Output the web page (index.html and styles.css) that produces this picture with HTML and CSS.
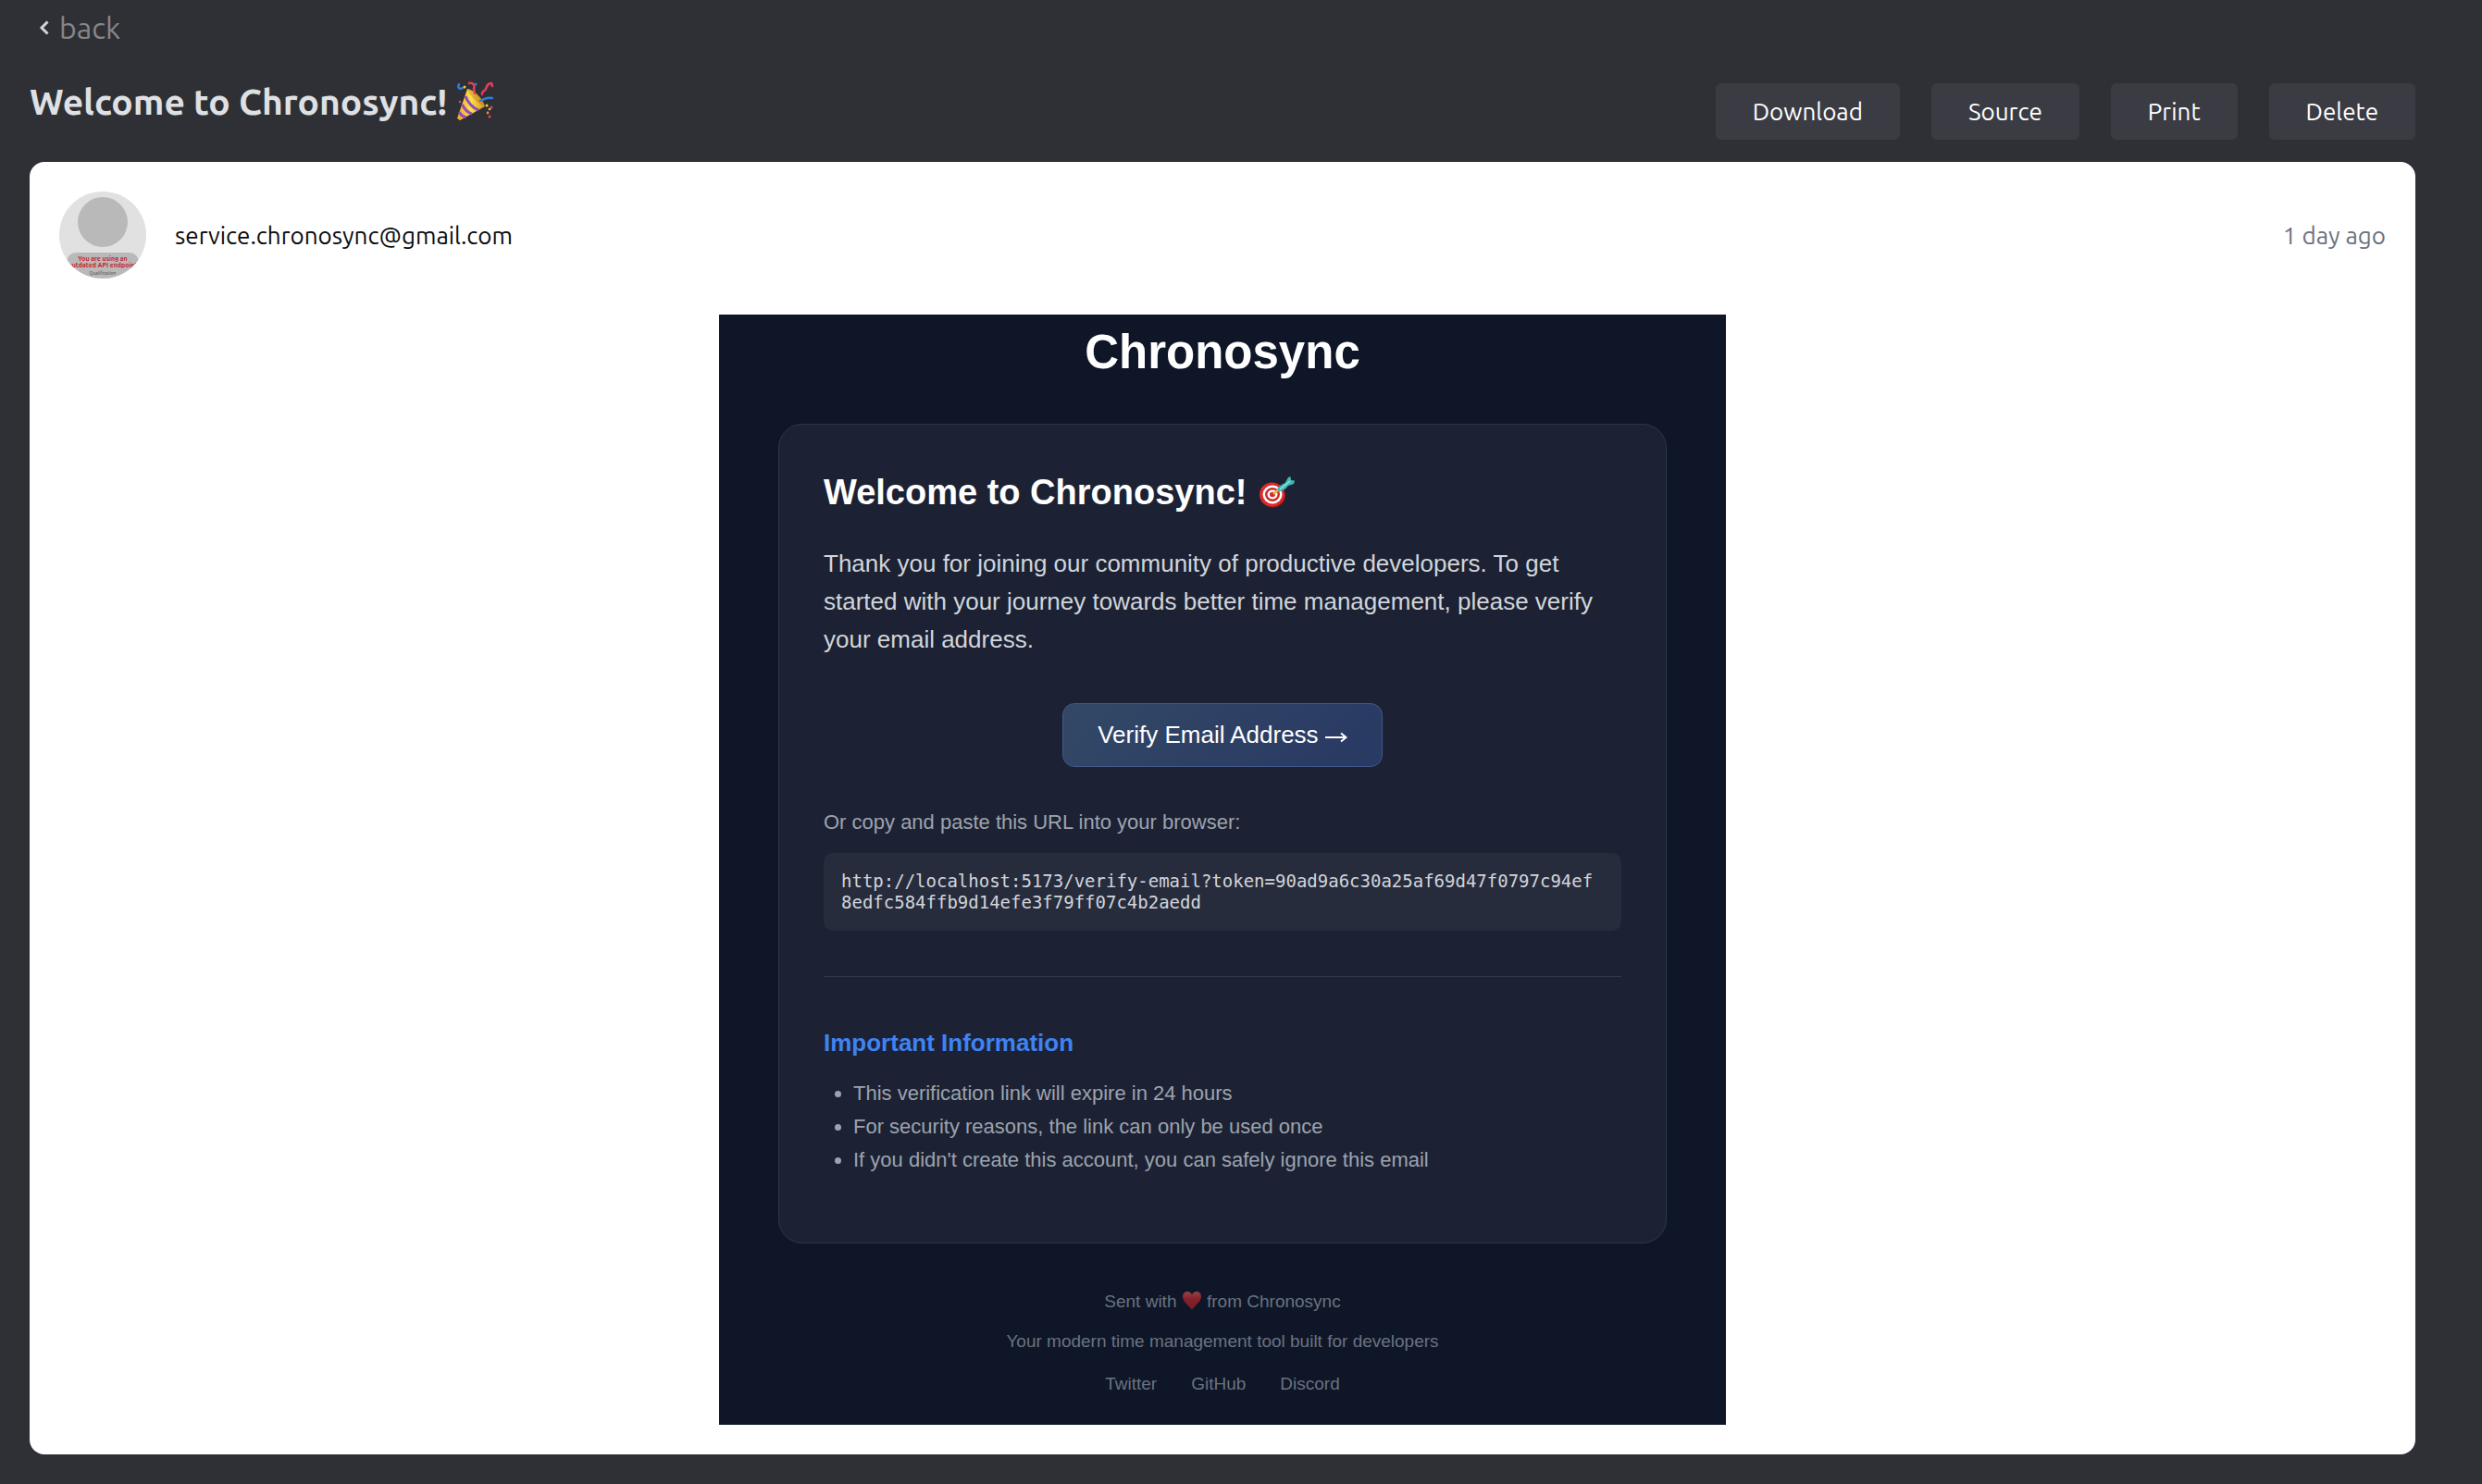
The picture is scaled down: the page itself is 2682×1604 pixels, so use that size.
FILE: index.html
```html
<!DOCTYPE html>
<html lang="en">
<head>
<meta charset="utf-8">
<title>Welcome to Chronosync!</title>
<link rel="stylesheet" href="styles.css">
</head>
<body>
<main class="page">
  <nav>
    <a class="back" href="#">
      <svg class="back-icon" viewBox="0 0 12 18" aria-hidden="true"><path d="M9.500 2.500 3 9l6.500 6.500"/></svg>
      back
    </a>
  </nav>
  <header class="toolbar">
    <h1 class="subject">Welcome to Chronosync!
      <svg class="subject-icon" viewBox="0 0 40 44" role="img" aria-label="Party popper">
        <defs><linearGradient id="cone" x1="0" y1="0" x2="1" y2="0"><stop offset="0" stop-color="#f2a81d"/><stop offset=".5" stop-color="#ffe04a"/><stop offset="1" stop-color="#d9951c"/></linearGradient></defs>
        <path fill="url(#cone)" d="M12 8C20 10 28 18 31 27L4 42 1 40Z"/>
        <path fill="#b06a18" d="M12 8c7 0 18 11 19 19-7-3-16-10-19-19Z" opacity=".35"/>
        <g stroke="#8d4bc4" stroke-width="3" fill="none"><path d="M10 16c2 6 8 13 14 15M6.500 25c2 4 6 9 10.500 10M3.500 33c1 3 4 5 7 6"/></g>
        <g fill="none" stroke-width="2.500" stroke-linecap="round"><path stroke="#2f7de1" d="M3 3c-2 4 1 6 4 4M26 21c5-3 9-4 13-3"/><path stroke="#e63c5a" d="M14 2c5-1 6 3 5 6l1 5M28 14c-1-4 3-3 4-6 1-3 2-6 6-6l1 3"/></g>
        <g fill="#f0c93c"><circle cx="9" cy="6" r="1.500"/><circle cx="33" cy="26" r="1.500"/><circle cx="36" cy="30" r="1.300"/></g>
        <g fill="#e0485f"><circle cx="4" cy="22" r="1.300"/><circle cx="38" cy="28" r="1.500"/><circle cx="36" cy="38" r="1.500"/></g>
        <circle cx="21" cy="3" r="1.500" fill="#2f7de1"/><circle cx="34" cy="34" r="1.400" fill="#f08a3c"/>
      </svg>
    </h1>
    <div class="actions">
      <button class="action" type="button">Download</button>
      <button class="action" type="button">Source</button>
      <button class="action" type="button">Print</button>
      <button class="action" type="button">Delete</button>
    </div>
  </header>
  <article class="message">
    <div class="sender">
      <svg class="avatar" viewBox="0 0 94 94" role="img" aria-label="Avatar">
        <defs><clipPath id="round"><circle cx="47" cy="47" r="47"/></clipPath></defs>
        <g clip-path="url(#round)">
          <rect width="94" height="94" fill="#e1e1e1"/>
          <circle cx="47" cy="33" r="27" fill="#b9b9b9"/>
          <rect x="8" y="66" width="78" height="40" rx="10" fill="#b9b9b9"/>
          <text class="avatar-alert" x="47" y="75">You are using an</text>
          <text class="avatar-alert" x="47" y="82">outdated API endpoint</text>
          <text class="avatar-note" x="47" y="90">Qualification</text>
        </g>
      </svg>
      <span class="address">service.chronosync@gmail.com</span>
      <time class="age">1 day ago</time>
    </div>
    <div class="email">
      <h2 class="brand">Chronosync</h2>
      <section class="card">
        <h3 class="welcome">Welcome to Chronosync!
          <svg class="target" viewBox="0 0 38 34" role="img" aria-label="Target">
            <ellipse cx="14.500" cy="21" rx="13.500" ry="12.500" fill="#a3131a"/>
            <ellipse cx="13.500" cy="19.500" rx="13.500" ry="13" fill="#dc2a2a"/>
            <ellipse cx="14" cy="19.500" rx="10.500" ry="10" fill="#fff"/>
            <ellipse cx="14" cy="19.500" rx="8" ry="7.500" fill="#d22a2a"/>
            <ellipse cx="14" cy="19.500" rx="5.500" ry="5" fill="#fff"/>
            <ellipse cx="14" cy="19.500" rx="3" ry="2.800" fill="#d22a2a"/>
            <path d="M15 19 21 14" stroke="#e6b53a" stroke-width="2.500"/>
            <path fill="#3fb8b6" d="M19 13.500c2-3 5-5 8.500-6.500L31 1l2.500-1 .5 4 4 .5-1 3.500-6 2c-2 3-6 6-10 6.500Z"/>
            <path d="m22 14 11-9" stroke="#8ee4de" stroke-width="1.500"/>
          </svg>
        </h3>
        <p class="intro">Thank you for joining our community of productive developers. To get started with your journey towards better time management, please verify your email address.</p>
        <div class="cta"><a class="verify" href="#">Verify Email Address <svg class="arrow" viewBox="0 0 24 12" aria-hidden="true"><path d="M0 6h22M17 1.500 22.500 6 17 10.500"/></svg></a></div>
        <p class="hint">Or copy and paste this URL into your browser:</p>
        <code class="url">http://localhost:5173/verify-email?token=90ad9a6c30a25af69d47f0797c94ef8edfc584ffb9d14efe3f79ff07c4b2aedd</code>
        <hr class="rule">
        <h4 class="info-title">Important Information</h4>
        <ul class="info">
          <li>This verification link will expire in 24 hours</li>
          <li>For security reasons, the link can only be used once</li>
          <li>If you didn't create this account, you can safely ignore this email</li>
        </ul>
      </section>
      <footer class="footer">
        <p class="footer-line">Sent with <svg class="heart" viewBox="0 0 20 20" role="img" aria-label="love"><defs><linearGradient id="love" x1="0" y1="0" x2="0" y2="1"><stop offset="0" stop-color="#94444c"/><stop offset=".4" stop-color="#872129"/><stop offset="1" stop-color="#741c26"/></linearGradient></defs><path fill="url(#love)" d="M10 20C7 15 0 11 0 5.500 0 2 2.500 0 5 0c2.500 0 4.200 1.500 5 3.500C10.800 1.500 12.500 0 15 0c2.500 0 5 2 5 5.500C20 11 13 15 10 20Z"/></svg> from Chronosync</p>
        <p class="footer-line">Your modern time management tool built for developers</p>
        <div class="social"><a href="#">Twitter</a><a href="#">GitHub</a><a href="#">Discord</a></div>
      </footer>
    </div>
  </article>
</main>
</body>
</html>
```
FILE: styles.css
```css
* { box-sizing: border-box; }

body {
  margin: 0;
  background: #2f3035;
  color: #dfe0e3;
  font-family: Ubuntu, "Noto Sans", sans-serif;
}

h1, h2, h3, h4, p, ul { margin: 0; }
a { color: inherit; text-decoration: none; }

.page { padding: 8px 72px 32px 32px; }

.back {
  display: inline-flex;
  align-items: center;
  gap: 10px;
  padding-left: 10px;
  color: #85868a;
  font-size: 32px;
  line-height: 44px;
}
.back-icon { width: 12px; height: 18px; fill: none; stroke: #d4d4d8; stroke-width: 3px; }

.toolbar {
  display: flex;
  justify-content: space-between;
  align-items: flex-start;
  padding: 33px 0 24px;
}
.subject { font-size: 39px; line-height: 50px; font-weight: 700; }
.subject-icon { width: 40px; height: 44px; vertical-align: -8px; }

.actions { display: flex; gap: 34px; padding-top: 5px; }
.action {
  padding: 0 40px;
  border: 0;
  border-radius: 6px;
  background: #3b3b43;
  color: #fff;
  font: inherit;
  font-size: 26px;
  line-height: 61px;
}

.message { padding: 32px; border-radius: 16px; background: #fff; color: #0b0b0c; }
.sender { display: flex; align-items: center; gap: 31px; font-size: 26px; }
.avatar { width: 94px; height: 94px; }
.avatar-alert { fill: #c8242b; font-size: 7px; font-weight: 700; text-anchor: middle; }
.avatar-note { fill: #444; font-size: 5px; text-anchor: middle; }
.age { margin-left: auto; color: #6b7280; }

.email {
  max-width: 1088px;
  margin: 39px auto 0;
  padding: 0 64px 29px;
  background: #0e1628;
  font-family: Arial, "Liberation Sans", sans-serif;
}
.brand { color: #fff; font-size: 51px; line-height: 82px; text-align: center; }

.card {
  margin-top: 36px;
  padding: 48px 48px 71px;
  border: 1px solid #2c3748;
  border-radius: 26px;
  background: #1c2233;
}
.welcome { color: #fff; font-size: 38px; line-height: 50px; }
.target { width: 38px; height: 34px; margin-left: 3px; vertical-align: -4px; }
.intro { margin-top: 32px; color: #d1d5db; font-size: 26px; line-height: 41px; }

.cta { display: flex; justify-content: center; margin: 48px 0 42px; }
.verify {
  padding: 0 37px;
  border: 1px solid #40598a;
  border-radius: 13px;
  background: linear-gradient(135deg, #334866, #283963);
  color: #fff;
  font-size: 26px;
  line-height: 67px;
}
.arrow { width: 24px; height: 12px; fill: none; stroke: #fff; stroke-width: 2px; }

.hint { color: #9ca3af; font-size: 22px; line-height: 36px; }
.url {
  display: block;
  margin-top: 15px;
  padding: 19px 24px 19px 19px;
  border-radius: 10px;
  background: #272c3d;
  color: #d1d5db;
  font-family: "DejaVu Sans Mono", monospace;
  font-size: 19px;
  line-height: 23px;
  word-break: break-all;
}
.rule { margin: 49px 0 50px; border: 0; border-top: 1px solid #2f3a4a; }
.info-title { color: #3f82f2; font-size: 26px; line-height: 42px; }
.info { margin-top: 16px; padding-left: 32px; color: #9ca3af; font-size: 22px; line-height: 36px; }

.footer { margin-top: 48px; color: #6b7280; font-size: 19px; line-height: 30px; text-align: center; }
.footer-line { margin-bottom: 13px; }
.heart { width: 20px; height: 20px; margin: 0 1px; vertical-align: -3px; }
.social { display: flex; justify-content: center; gap: 37px; padding-top: 3px; }
```
